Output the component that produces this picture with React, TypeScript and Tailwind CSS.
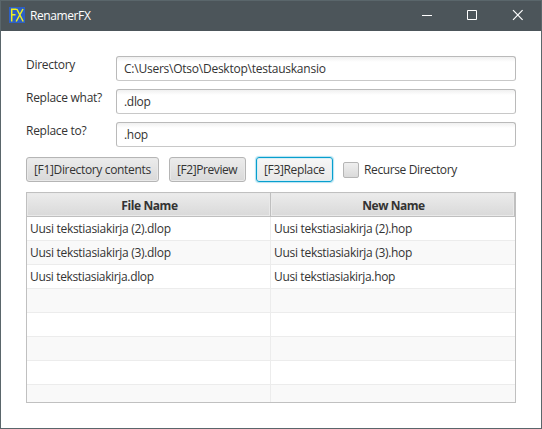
import React from "react";

const rows = [
  ["Uusi tekstiasiakirja (2).dlop", "Uusi tekstiasiakirja (2).hop"],
  ["Uusi tekstiasiakirja (3).dlop", "Uusi tekstiasiakirja (3).hop"],
  ["Uusi tekstiasiakirja.dlop", "Uusi tekstiasiakirja.hop"],
  ["", ""],
  ["", ""],
  ["", ""],
  ["", ""],
  ["", ""],
];

function Field({ label, value, spacing }: { label: string; value: string; spacing: string }) {
  return (
    <div className="flex h-[25px]">
      <div className="w-[90px] shrink-0 pt-px leading-4 tracking-[-0.28px]">{label}</div>
      <div className={`h-[25px] flex-1 rounded-[3px] border border-[#bababa] border-b-[#c8c8c8] bg-linear-to-b from-[#f0f0f0] to-white to-[5px] pl-[7px] leading-[24px] ${spacing}`}>
        {value}
      </div>
    </div>
  );
}

function Button({ label, className }: { label: string; className: string }) {
  return (
    <button className={`h-[25px] shrink-0 rounded-[3px] border text-left pl-[7px] leading-[23px] whitespace-nowrap ${className}`}>
      {label}
    </button>
  );
}

const plain = "border-[#b5b5b5] bg-linear-to-b from-[#ececec] to-[#d9d9d9] shadow-[inset_0_0_0_1px_#e9e9e9]";
const heading = "h-[23px] border-r border-[#bfbfbf] bg-linear-to-b from-[#ececec] to-[#d9d9d9] pl-[2px] leading-[25px] shadow-[inset_0_0_0_1px_#e9e9e9]";

export default function App() {
  return (
    <div className="flex h-[429px] w-[542px] flex-col overflow-hidden border border-[#5a666b] bg-white font-['Open_Sans','Noto_Sans',sans-serif] text-[12px] text-[#333333]">
      <header className="flex h-[30px] shrink-0 items-center bg-[#4c555a] text-white">
        <svg className="mb-[2px] ml-2 h-4 w-4" viewBox="0 0 16 16" fill="none">
          <rect width="16" height="16" fill="#2d5fc4" />
          <path d="M2.7 14.5V2.2H7.5M2.7 7.7H6.5M7.8 2L14.2 14.5M14 2L7.2 14.5" stroke="#f0f01c" strokeWidth="1.5" />
        </svg>
        <span className="ml-[5px] flex-1 leading-4 tracking-[-0.4px]">RenamerFX</span>
        <svg className="h-[30px] w-[138px]" viewBox="0 0 138 30" fill="none" stroke="white">
          <path d="M19 14.5h10M64.5 9.5h9v9h-9z" />
          <path d="M110 9.2l9.6 9.6M119.6 9.2l-9.6 9.6" strokeWidth="1.2" />
        </svg>
      </header>
      <main className="flex flex-1 flex-col px-[25px] pt-[25px]">
        <div className="flex flex-col gap-2">
          <Field label="Directory" value="C:\Users\Otso\Desktop\testauskansio" spacing="tracking-[-0.24px]" />
          <Field label="Replace what?" value=".dlop" spacing="tracking-[-0.3px]" />
          <Field label="Replace to?" value=".hop" spacing="tracking-[-0.3px]" />
        </div>
        <div className="mt-[10px] flex h-[25px] items-center">
          <Button label="[F1]Directory contents" className={`w-[133px] tracking-[-0.34px] ${plain}`} />
          <Button label="[F2]Preview" className={`ml-[10px] w-[77px] tracking-[-0.42px] ${plain}`} />
          <Button
            label="[F3]Replace"
            className="ml-[10px] w-[77px] border-[#079fce] bg-linear-to-b from-[#f7f7f7] to-[#e8e8e8] tracking-[-0.35px] shadow-[0_0_1px_1px_#b5e2f1,inset_0_0_0_1px_#d8eef5]"
          />
          <span className="ml-[10px] mt-px h-4 w-4 shrink-0 rounded-[2px] border border-[#b5b5b5] bg-linear-to-b from-[#efefef] to-[#dadada]" />
          <span className="ml-[5px] leading-[25px] tracking-[-0.38px]">Recurse Directory</span>
        </div>
        <div className="mt-[10px] h-[211px] w-[490px] overflow-hidden border border-[#c0c0c0]">
          <div className="grid h-6 grid-cols-[244px_244px] border-b border-[#bfbfbf] text-center font-bold">
            <div className={`tracking-[-0.4px] ${heading}`}>File Name</div>
            <div className={`tracking-[-0.45px] ${heading}`}>New Name</div>
          </div>
          {rows.map(([from, to], i) => (
            <div
              key={i}
              className={`grid h-6 grid-cols-[244px_244px] border-b border-[#ececec] leading-[24px] odd:bg-[#f9f9f9] even:bg-white ${i === 2 ? "tracking-[-0.35px]" : "tracking-[-0.3px]"}`}
            >
              <div className="h-[23px] border-r border-[#ececec] pl-[3px]">{from}</div>
              <div className="h-[23px] pl-[3px]">{to}</div>
            </div>
          ))}
        </div>
      </main>
    </div>
  );
}
